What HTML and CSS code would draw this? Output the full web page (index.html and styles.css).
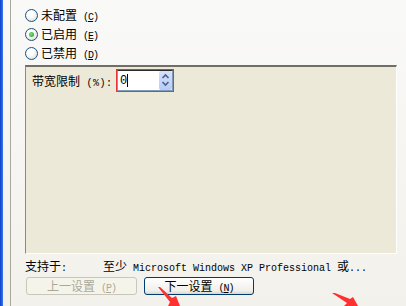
FILE: index.html
```html
<!DOCTYPE html>
<html lang="zh">
<head>
    <meta charset="UTF-8">
    <title>带宽限制</title>
    <link rel="stylesheet" href="styles.css">
</head>
<body>
    <div class="window">
        <div class="edge"></div>
        <div class="rule"></div>
        <div class="main">
            <div class="options">
                <label class="radio"><span class="dot"></span><span>未配置<span class="mono"> </span><span class="key">(<u>C</u>)</span></span></label>
                <label class="radio"><span class="dot checked"></span><span>已启用<span class="mono"> </span><span class="key">(<u>E</u>)</span></span></label>
                <label class="radio"><span class="dot"></span><span>已禁用<span class="mono"> </span><span class="key">(<u>D</u>)</span></span></label>
            </div>

            <div class="panel">
                <div class="field">
                    <span class="field-label">带宽限制<span class="mono"> (%):</span></span>
                    <div class="spin-wrap">
                        <div class="spin">
                            <span class="spin-input">0<i class="caret"></i></span>
                            <span class="spin-btns">
                                <svg width="13" height="18" viewBox="0 0 13 18">
                                    <path d="M3.5 7 L6.5 4 L9.5 7" fill="none" stroke="#4d6185" stroke-width="1.6"/>
                                    <path d="M3.5 11 L6.5 14 L9.5 11" fill="none" stroke="#4d6185" stroke-width="1.6"/>
                                </svg>
                            </span>
                        </div>
                    </div>
                </div>
            </div>

            <div class="support">
                <span class="support-label">支持于<span class="mono">:</span></span>
                <span>至少<span class="mono"> Microsoft Windows XP Professional </span>或<span class="mono">...</span></span>
            </div>

            <div class="buttons">
                <button class="btn" disabled>上一设置<span class="mono"> </span><span class="key">(<u>P</u>)</span></button>
                <button class="btn btn-next">下一设置<span class="mono"> </span><span class="key">(<u>N</u>)</span></button>
            </div>
        </div>
    </div>

    <svg class="arrow arrow-a" width="30" height="24" viewBox="0 0 30 24">
        <polygon points="8,5 10,5 22,16 26,14 30,24 18,24 20,20" fill="#ff3030"/>
    </svg>
    <svg class="arrow arrow-b" width="34" height="14" viewBox="0 0 34 14">
        <polygon points="2,1 5,1 20,7 23,5 28,14 14,14 17,11" fill="#ff3030"/>
    </svg>
</body>
</html>
```

FILE: styles.css
```css
body, html {
    margin: 0;
    height: 100%;
    overflow: hidden;
}

body {
    position: relative;
    font-family: "Noto Sans CJK SC", "Noto Sans", sans-serif;
    font-size: 12px;
    color: #000;
    background: linear-gradient(#f9f9f8, #f3f1eb);
}

.window {
    display: flex;
    height: 306px;
}

.edge {
    width: 3px;
    background: linear-gradient(90deg, #0a40c8, #3d77ee);
}

.rule {
    width: 1px;
    margin-left: 7px;
    background: #a9a89f;
}

.main {
    display: flex;
    flex-direction: column;
    width: 372px;
    padding-left: 14px;
}

.mono {
    font-family: "Liberation Mono", monospace;
    font-size: 10px;
}

.key {
    font-family: "Liberation Mono", monospace;
    font-size: 10px;
    letter-spacing: -1px;
}

/* radio buttons */
.options {
    display: flex;
    flex-direction: column;
    padding-top: 6px;
}

.radio {
    display: flex;
    align-items: center;
    gap: 3px;
    height: 19px;
    line-height: 19px;
}

.dot {
    width: 11px;
    height: 11px;
    border: 1px solid #1c5180;
    border-radius: 50%;
    background: radial-gradient(circle at 40% 35%, #ffffff 30%, #d6d3c8);
    display: flex;
    align-items: center;
    justify-content: center;
}

.dot.checked::after {
    content: "";
    width: 5px;
    height: 5px;
    border-radius: 50%;
    background: radial-gradient(circle at 40% 40%, #7de07d, #1f9a1f);
}

/* options panel */
.panel {
    margin-top: 2px;
    height: 183px;
    background: #ece9d8;
    border-top: 2px solid #716f64;
    border-left: 1px solid #8c8a80;
    border-right: 1px solid #ffffff;
    border-bottom: 1px solid #ffffff;
    padding: 3px 6px 0;
}

.field {
    display: flex;
    align-items: center;
    height: 21px;
}

.field-label {
    width: 84px;
    white-space: nowrap;
}

.field-label .mono {
    letter-spacing: 0.5px;
}

.spin-wrap {
    border: 1px solid #e8333a;
}

.spin {
    display: flex;
    height: 19px;
    border: 1px solid #7f9db9;
    border-top-color: #2b2b2b;
    background: #fff;
}

.spin-input {
    display: flex;
    align-items: center;
    width: 39px;
    padding-left: 2px;
    font-family: "Liberation Mono", monospace;
    font-size: 12px;
}

.caret {
    width: 1px;
    height: 13px;
    background: #000;
}

.spin-btns {
    display: flex;
    width: 13px;
    background: linear-gradient(#d6e1fc, #b7cbf8);
    border-radius: 2px;
}

/* footer */
.support {
    display: flex;
    align-items: center;
    height: 19px;
    margin-top: 2px;
    white-space: nowrap;
}

.support-label {
    width: 78px;
}

.buttons {
    display: flex;
    gap: 7px;
    margin-top: 2px;
    padding-left: 1px;
}

.btn {
    width: 111px;
    height: 18px;
    padding: 0;
    font-family: "Noto Sans CJK SC", sans-serif;
    font-size: 12px;
    line-height: 16px;
    color: #000;
    border: 1px solid #003c74;
    border-radius: 3px;
    background: linear-gradient(#ffffff, #f0efea 80%, #d8d5cb);
}

.btn:disabled {
    color: #aca899;
    border-color: #c9c7ba;
    background: #f5f4ea;
}

.btn-next {
    width: 110px;
}

/* red annotation arrows */
.arrow {
    position: absolute;
}

.arrow-a {
    left: 150px;
    top: 282px;
}

.arrow-b {
    left: 330px;
    top: 292px;
}
```
